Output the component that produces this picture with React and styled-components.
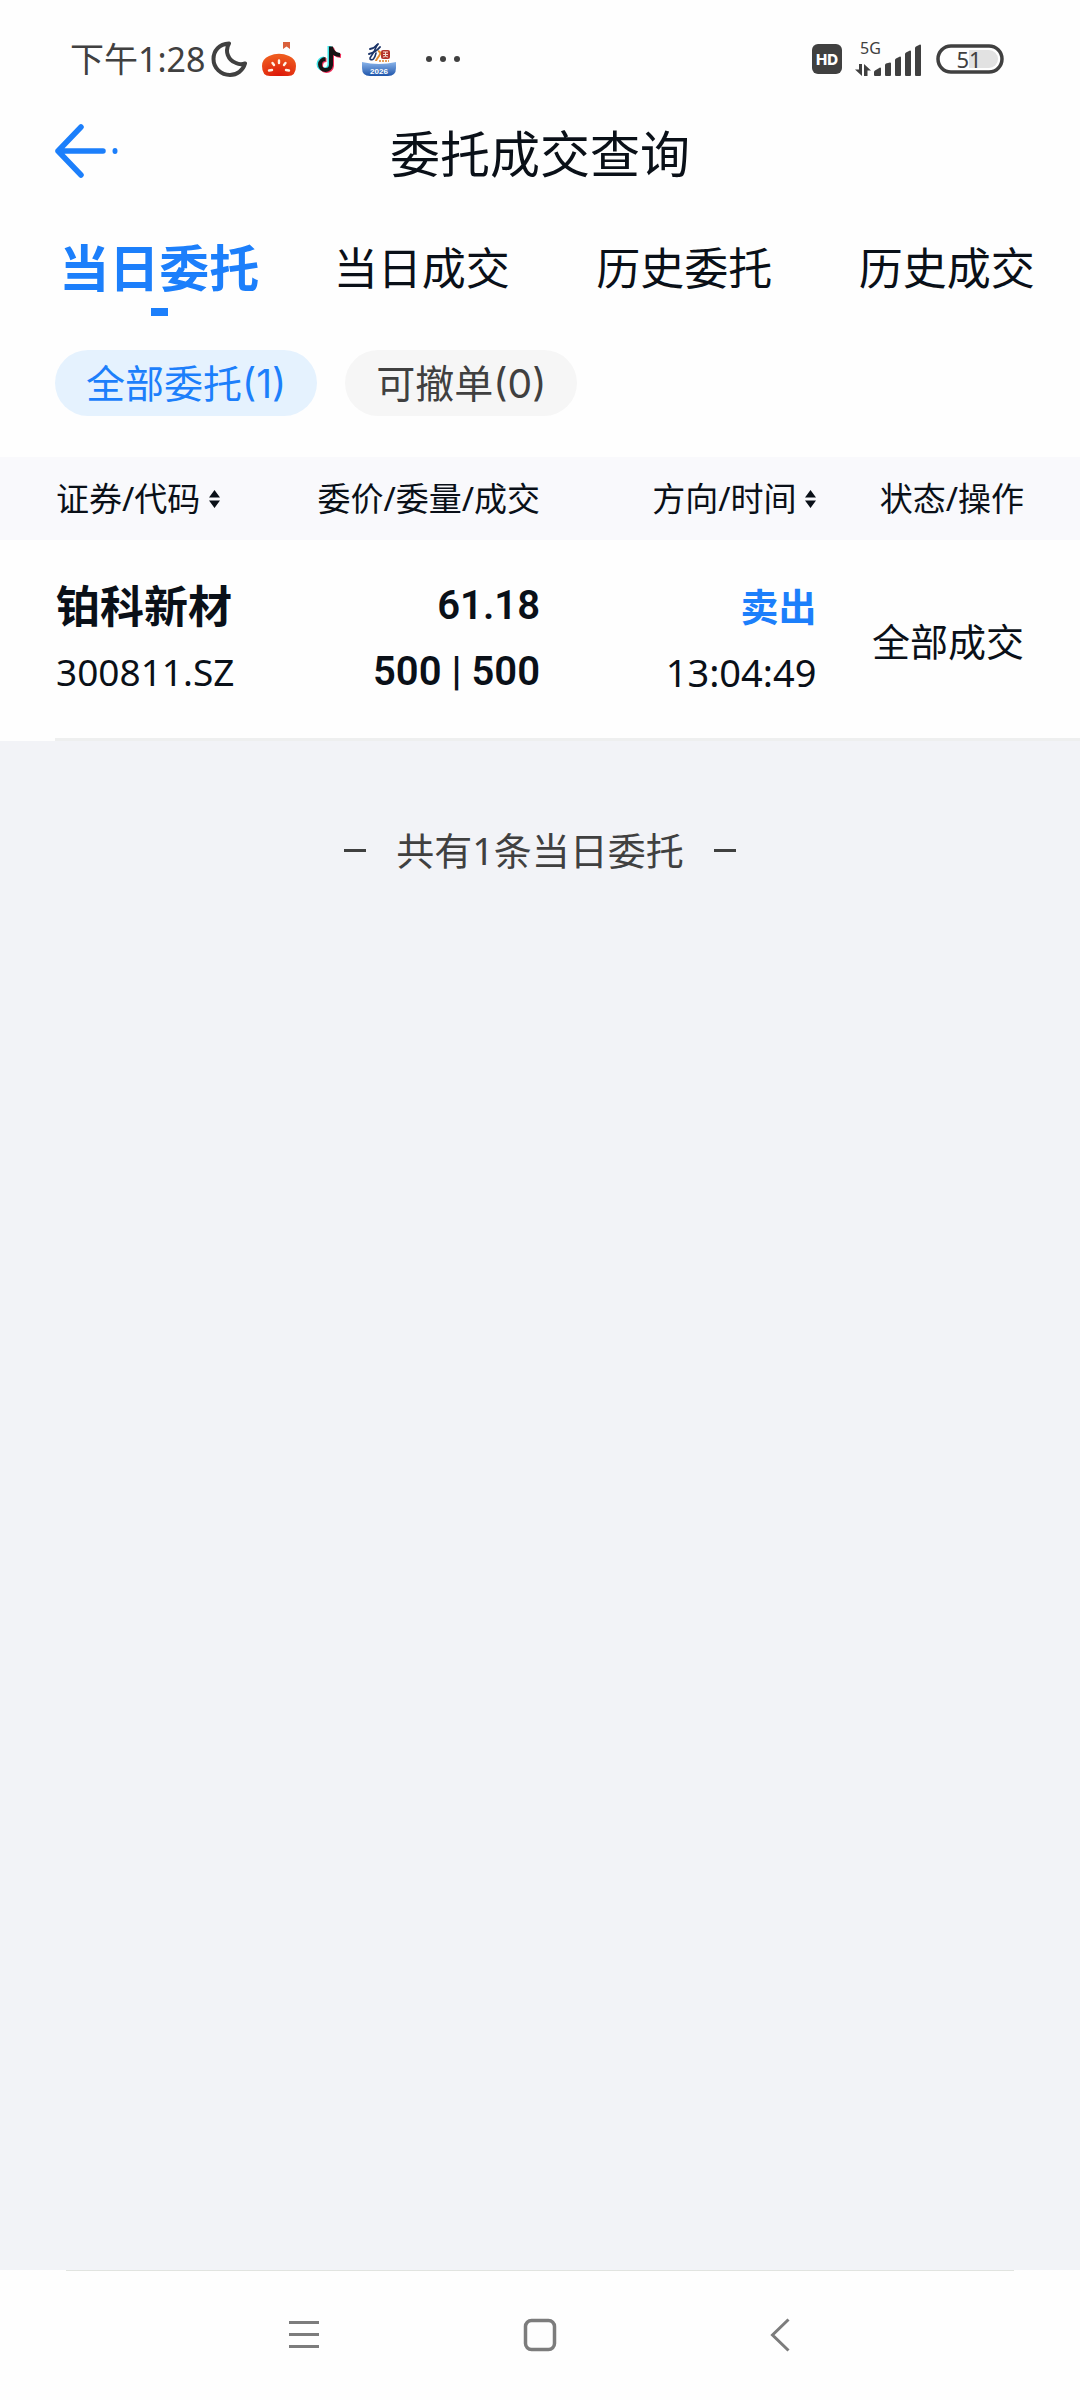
import React from 'react'
import styled, { createGlobalStyle } from 'styled-components'

const GlobalStyle = createGlobalStyle`
* {
box-sizing: border-box;
}
body {
margin: 0;
background: #f2f3f7;
color: #0a1018;
font-family: "Noto Sans", "Noto Sans CJK SC", sans-serif;
}
button {
border: none;
padding: 0;
background: none;
color: inherit;
font: inherit;
cursor: pointer;
}
svg {
display: block;
}
`
const Page = styled.div`
display: flex;
flex-direction: column;
min-height: 100vh;
`
const StatusBar = styled.div`
display: flex;
align-items: center;
justify-content: space-between;
height: 118px;
padding: 0 76px 0 70px;
background: #fefefe;
color: #404040;
`
const StatusGroup = styled.div`
display: flex;
align-items: center;
gap: ${props => props.$gap}px;
`
const Clock = styled.span`
font-size: 34px;
line-height: 48px;
`
const Header = styled.header`
display: grid;
grid-template-columns: 1fr auto 1fr;
align-items: center;
height: 72px;
padding: 0 55px;
background: #fefefe;
`
const BackButton = styled.button`
justify-self: start;
padding-bottom: 6px;
`
const Title = styled.h1`
margin: 0;
font-size: 50px;
font-weight: 400;
line-height: 72px;
`
const Tabs = styled.nav`
display: flex;
padding: 48px 2px 0 28px;
background: #fefefe;
`
const Tab = styled.button`
display: flex;
flex: 1;
flex-direction: column;
align-items: center;
gap: 10px;
font-size: ${props => (props.$active ? 50 : 44)}px;
font-weight: ${props => (props.$active ? 700 : 400)};
line-height: 60px;
white-space: nowrap;
color: ${props => (props.$active ? '#1c7ffb' : '#0a1018')};

&::after {
content: "";
width: 17px;
height: 8px;
background: ${props => (props.$active ? '#1c7ffb' : 'transparent')};
}
`
const Filters = styled.div`
display: flex;
gap: 28px;
padding: 34px 55px 41px;
background: #fefefe;
`
const Chip = styled.button`
height: 66px;
padding: 0 31px;
border-radius: 33px;
font-family: Inter, "Noto Sans CJK SC", sans-serif;
font-size: 39px;
line-height: 68px;
color: ${props => (props.$active ? '#1c7ffb' : '#404040')};
background: ${props => (props.$active ? '#e5f2fe' : '#f6f6f6')};
`
const Orders = styled.table`
width: 100%;
table-layout: fixed;
border-collapse: collapse;
background: #fefefe;
`
const HeadCell = styled.th`
width: ${props => props.$width};
height: 83px;
padding: 0;
padding-left: ${props => (props.$first ? 56 : 0)}px;
padding-right: ${props => (props.$last ? 56 : 0)}px;
background: #f9f9fc;
font-size: 33px;
font-weight: 400;
line-height: 48px;
text-align: ${props => (props.$first ? 'left' : 'right')};
white-space: nowrap;
`
const SortButton = styled.button`
display: inline-flex;
align-items: center;
gap: 9px;
`
const Cell = styled.td`
padding: 36px 0;
padding-left: ${props => (props.$first ? 56 : 0)}px;
padding-right: ${props => (props.$last ? 56 : 0)}px;
font-size: 38px;
text-align: ${props => (props.$first ? 'left' : 'right')};
white-space: nowrap;
`
const Stack = styled.div`
display: flex;
flex-direction: column;
gap: 6px;
line-height: 60px;
`
const StockName = styled.span`
font-size: 44px;
font-weight: 700;
`
const StockCode = styled.span`
font-size: 37px;
`
const Amount = styled.span`
font-family: Roboto, sans-serif;
font-size: 40px;
font-weight: 600;
`
const Side = styled.span`
font-weight: 700;
color: #1c7ffb;
`
const DividerWrap = styled.div`
padding-left: 55px;
background: #fefefe;
`
const Divider = styled.div`
height: 3px;
background: #eeefef;
`
const Summary = styled.p`
display: flex;
flex: 1 0 auto;
align-items: flex-start;
align-self: center;
gap: 30px;
margin: 79px 0 0;
font-size: 38px;
line-height: 60px;
color: #404040;
`
const Dash = styled.span`
width: 22px;
height: 3px;
margin-top: 29px;
background: #404040;
`
const NavBar = styled.footer`
display: flex;
flex-direction: column;
align-items: center;
height: 130px;
padding: 0 66px;
background: #fefefe;
`
const NavLine = styled.div`
width: 100%;
height: 1px;
background: #e1e4e0;
`
const NavButtons = styled.div`
display: flex;
flex: 1;
align-items: center;
gap: 196px;
`

const MoonIcon = () => (
    <svg width="36" height="36" viewBox="0 0 36 36" fill="none" stroke="#404040" strokeWidth="4" strokeLinejoin="round">
        <path d="M18 2.500C8 3 2.500 10 2.500 18C2.500 27 10 34 19 34C26 34 32 29.500 34 22.500C31 23.500 28 23.500 25 22C17 19 13.500 10 18 2.500Z" />
    </svg>
)

const TomatoIcon = () => (
    <svg width="34" height="34" viewBox="0 0 34 34">
        <defs>
            <radialGradient id="tomato" cx="50%" cy="100%" r="90%">
                <stop offset="0" stopColor="#dc1508" />
                <stop offset="1" stopColor="#ee5a1e" />
            </radialGradient>
        </defs>
        <path d="M21 0h7v7l-3.500-2.500L21 7z" fill="#d9603c" />
        <path d="M7 14Q17 9.500 27 14Q34 17 34 24Q34 34 26 34H8Q0 34 0 24Q0 17 7 14Z" fill="url(#tomato)" />
        <g stroke="#fff3e6" strokeWidth="2.400" strokeLinecap="round">
            <path d="M17 18.500v2.500M10.500 21l1.500 2M23.500 21l-1.500 2M7 28.500l3-.5M27 28.500l-3-.5" />
        </g>
    </svg>
)

const NoteIcon = () => (
    <svg width="26" height="28" viewBox="0 0 26 28" fill="none" strokeWidth="4">
        <path d="M13.500 1v18.500a5.500 5.500 0 1 1-5.500-6M13.500 2q1.500 7 9 7.500" stroke="#3fe3e6" />
        <path d="M16 2.500V21a5.500 5.500 0 1 1-5.500-6M16 3q1.500 7.500 9 8" stroke="#f0305c" />
        <path d="M15 1.500V20a5.500 5.500 0 1 1-5.500-6M15 2.500q1.500 7 9 7.500" stroke="#151515" />
    </svg>
)

const BrokerIcon = () => (
    <svg width="34" height="34" viewBox="0 0 34 34">
        <defs>
            <linearGradient id="broker" x1="0" y1="0" x2="0" y2="1">
                <stop offset="0" stopColor="#8ab4ea" />
                <stop offset="1" stopColor="#1e55ab" />
            </linearGradient>
        </defs>
        <path d="M0 20Q17 24 34 20V26Q34 34 26 34H8Q0 34 0 26Z" fill="url(#broker)" />
        <g fill="none" stroke="#1c3468" strokeLinecap="round">
            <path d="M8 7Q13 6 16 2M7 12Q14 10 18 5" strokeWidth="2" />
            <path d="M15 3Q13 9 8 16M8 17Q12 20 14 11" strokeWidth="1.600" />
        </g>
        <path d="M16 9q4 1 1 5t-3 5" fill="none" stroke="#e58a2b" strokeWidth="2" />
        <rect x="19" y="8" width="9" height="9" rx="2" fill="#b5322c" />
        <path d="M21 10h5M21 12.500h5M21 15q3-1 5 0M23.500 10v4" stroke="#f6dcd2" strokeWidth="1" />
        <path d="M17 19h10" stroke="#e5a05a" strokeWidth="2" strokeDasharray="2 1" />
        <text x="17" y="32" textAnchor="middle" fontFamily="Liberation Sans" fontSize="8" fontWeight="700" fill="#fff">2026</text>
    </svg>
)

const DotsIcon = () => (
    <svg width="34" height="8" viewBox="0 0 34 8" fill="#404040">
        <circle cx="3" cy="4" r="3" />
        <circle cx="17" cy="4" r="3" />
        <circle cx="31" cy="4" r="3" />
    </svg>
)

const HdIcon = () => (
    <svg width="30" height="30" viewBox="0 0 30 30">
        <rect width="30" height="30" rx="6" fill="#404040" />
        <text x="15" y="20.500" textAnchor="middle" fontFamily="Inter" fontSize="15" fontWeight="800" fill="#fff">HD</text>
    </svg>
)

const SignalIcon = () => (
    <svg width="68" height="50" viewBox="0 -8 68 50" fill="#404040">
        <text x="5" y="12" fontFamily="Noto Sans" fontSize="16">5G</text>
        <path d="M4 22h3v12L0 27.500h4zM9 34V22l7 6.500h-3.500V34z" />
        <path d="M19 33v-3q0-1 1-1.500l5-3q1 0 1 1V33q0 1-1 1h-5q-1 0-1-1z" />
        <path d="M30 33V23q0-1 1-1.500l4-1q1 0 1 1V33q0 1-1 1h-4q-1 0-1-1z" />
        <path d="M40 33V18q0-1 1-1.500l4-2q1 0 1 1V33q0 1-1 1h-4q-1 0-1-1z" />
        <path d="M50 33V12q0-1 1-1.500l4-2q1 0 1 1V33q0 1-1 1h-4q-1 0-1-1z" />
        <path d="M60 33V6q0-1 1-1.500l4-2q1 0 1 1V33q0 1-1 1h-4q-1 0-1-1z" />
    </svg>
)

const BatteryIcon = () => (
    <svg width="68" height="30" viewBox="0 0 68 30">
        <path d="M33 6h20a9 9 0 0 1 0 18H33z" fill="#e2e2e2" />
        <rect x="2" y="2" width="64" height="26" rx="13" fill="none" stroke="#404040" strokeWidth="3.500" />
        <text x="33" y="23.500" textAnchor="middle" fontFamily="Noto Sans" fontSize="22" fill="#404040">51</text>
    </svg>
)

const ArrowIcon = () => (
    <svg width="64" height="54" viewBox="0 0 64 54" fill="none" stroke="#1c7ffb" strokeWidth="5.500" strokeLinecap="round" strokeLinejoin="round">
        <path d="M26 3L3 27l23 24M3 27h45" />
        <ellipse cx="60" cy="27" rx="2.500" ry="3" fill="#1c7ffb" stroke="none" />
    </svg>
)

const SortIcon = () => (
    <svg width="11" height="18" viewBox="0 0 11 18" fill="#0a1018">
        <path d="M5.500 0L11 7.500H0zM5.500 18L0 10.500h11z" />
    </svg>
)

const MenuIcon = () => (
    <svg width="40" height="40" viewBox="0 0 40 40" stroke="#7c7c7c" strokeWidth="3">
        <path d="M5 6.500h30M5 18.500h30M5 30.500h30" />
    </svg>
)

const HomeIcon = () => (
    <svg width="40" height="40" viewBox="0 0 40 40" fill="none" stroke="#7c7c7c" strokeWidth="3.500">
        <rect x="5.500" y="4.500" width="29" height="29" rx="6" />
    </svg>
)

const ChevronIcon = () => (
    <svg width="40" height="40" viewBox="0 0 40 40" fill="none" stroke="#7c7c7c" strokeWidth="3">
        <path d="M32.500 3.500L16.500 19l16 15.500" />
    </svg>
)

const tabs = ['当日委托', '当日成交', '历史委托', '历史成交']
const filters = ['全部委托(1)', '可撤单(0)']

const columns = [
    { title: '证券/代码', width: '26%', sortable: true },
    { title: '委价/委量/成交', width: '24%' },
    { title: '方向/时间', width: '25.6%', sortable: true },
    { title: '状态/操作', width: '24.4%' },
]

const orders = [
    { name: '铂科新材', code: '300811.SZ', price: '61.18', volume: '500 | 500', side: '卖出', time: '13:04:49', status: '全部成交' },
]

export default function App() {
    return (
        <Page>
            <GlobalStyle />
            <StatusBar>
                <StatusGroup $gap={30}>
                    <StatusGroup $gap={15}>
                        <StatusGroup $gap={6}>
                            <Clock>下午1:28</Clock>
                            <MoonIcon />
                        </StatusGroup>
                        <StatusGroup $gap={20}>
                            <TomatoIcon />
                            <NoteIcon />
                            <BrokerIcon />
                        </StatusGroup>
                    </StatusGroup>
                    <DotsIcon />
                </StatusGroup>
                <StatusGroup $gap={13}>
                    <HdIcon />
                    <SignalIcon />
                    <BatteryIcon />
                </StatusGroup>
            </StatusBar>
            <Header>
                <BackButton aria-label="返回"><ArrowIcon /></BackButton>
                <Title>委托成交查询</Title>
            </Header>
            <Tabs>
                {tabs.map((tab, i) => (
                    <Tab key={tab} $active={i === 0}>{tab}</Tab>
                ))}
            </Tabs>
            <Filters>
                {filters.map((filter, i) => (
                    <Chip key={filter} $active={i === 0}>{filter}</Chip>
                ))}
            </Filters>
            <Orders>
                <thead>
                    <tr>
                        {columns.map((col, i) => (
                            <HeadCell key={col.title} $width={col.width} $first={i === 0} $last={i === columns.length - 1}>
                                {col.sortable ? <SortButton>{col.title}<SortIcon /></SortButton> : col.title}
                            </HeadCell>
                        ))}
                    </tr>
                </thead>
                <tbody>
                    {orders.map(order => (
                        <tr key={order.code}>
                            <Cell $first>
                                <Stack>
                                    <StockName>{order.name}</StockName>
                                    <StockCode>{order.code}</StockCode>
                                </Stack>
                            </Cell>
                            <Cell>
                                <Stack>
                                    <Amount>{order.price}</Amount>
                                    <Amount>{order.volume}</Amount>
                                </Stack>
                            </Cell>
                            <Cell>
                                <Stack>
                                    <Side>{order.side}</Side>
                                    <span>{order.time}</span>
                                </Stack>
                            </Cell>
                            <Cell $last>{order.status}</Cell>
                        </tr>
                    ))}
                </tbody>
            </Orders>
            <DividerWrap>
                <Divider />
            </DividerWrap>
            <Summary>
                <Dash />
                <span>共有1条当日委托</span>
                <Dash />
            </Summary>
            <NavBar>
                <NavLine />
                <NavButtons>
                    <button aria-label="菜单"><MenuIcon /></button>
                    <button aria-label="主页"><HomeIcon /></button>
                    <button aria-label="后退"><ChevronIcon /></button>
                </NavButtons>
            </NavBar>
        </Page>
    )
}
